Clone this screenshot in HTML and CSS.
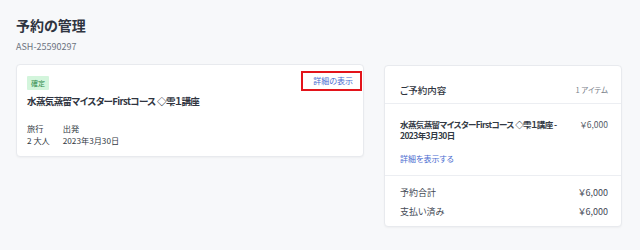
FILE: index.html
```html
<!DOCTYPE html>
<html lang="ja">
<head>
<meta charset="utf-8">
<link rel="stylesheet" href="styles.css">
</head>
<body>
<div class="page">
  <h1 class="title">予約の管理</h1>
  <div class="ref">ASH-25590297</div>
  <div class="cols">
    <div class="card booking">
      <div class="booking-top">
        <span class="badge">確定</span>
        <a class="detail-link">詳細の表示</a>
      </div>
      <div class="booking-name">水蒸気蒸留マイスターFirstコース ◇雫１講座</div>
      <div class="meta">
        <div class="meta-col">
          <div>旅行</div>
          <div>2 大人</div>
        </div>
        <div class="meta-col">
          <div>出発</div>
          <div>2023年3月30日</div>
        </div>
      </div>
    </div>
    <div class="card summary">
      <div class="sum-head">
        <span class="sum-title">ご予約内容</span>
        <span class="sum-count">1 アイテム</span>
      </div>
      <div class="sum-item">
        <div class="item-row">
          <span class="item-name">水蒸気蒸留マイスターFirstコース ◇雫１講座 - 2023年3月30日</span>
          <span class="item-price">￥6,000</span>
        </div>
        <a class="item-link">詳細を表示する</a>
      </div>
      <div class="sum-totals">
        <div class="total-row"><span>予約合計</span><span>￥6,000</span></div>
        <div class="total-row"><span>支払い済み</span><span>￥6,000</span></div>
      </div>
    </div>
  </div>
</div>
</body>
</html>
```
FILE: styles.css
```css
* { box-sizing: border-box; }
html, body { margin: 0; padding: 0; background: #f7f8fa; }
body {
  font-family: "Noto Sans CJK JP", "Noto Sans", sans-serif;
  font-feature-settings: "palt";
  color: #333a44;
  width: 640px;
  height: 250px;
  overflow: hidden;
}
.page { padding: 12px 16px 0 16px; }
.title {
  margin: 0;
  font-size: 14px;
  font-weight: 700;
  line-height: 26px;
  color: #2f3440;
}
.ref {
  font-size: 9px;
  color: #6b7280;
  line-height: 16px;
  margin-top: 1px;
}
.cols {
  display: flex;
  align-items: flex-start;
  gap: 20px;
  margin-top: 10px;
}
.card {
  background: #fff;
  border: 1px solid #e8eaee;
  border-radius: 4px;
  box-shadow: 0 1px 2px rgba(0,0,0,0.04);
}
.booking {
  width: 348px;
  padding: 6px 10px 10px 10px;
  margin-top: -1px;
}
.booking-top {
  display: flex;
  justify-content: space-between;
  align-items: flex-start;
}
.badge {
  margin-top: 5px;
  background: #d3f5dc;
  color: #2f8a4b;
  font-size: 7px;
  line-height: 14px;
  padding: 0 4px;
  border-radius: 1px;
}
.detail-link {
  color: #4a6cd0;
  font-size: 8px;
  line-height: 16px;
  border: 2px solid #e3141b;
  padding: 0 7px 0 10px;
  margin-right: -9px;
}
.booking-name {
  font-size: 9.5px;
  font-weight: 700;
  letter-spacing: -0.6px;
  line-height: 18px;
  margin-top: 1px;
  color: #2f3440;
}
.meta {
  display: flex;
  gap: 13px;
  margin-top: 12px;
  font-size: 8.2px;
  line-height: 12px;
  color: #333a44;
}
.summary {
  width: 238px;
  margin-top: 0px;
}
.sum-head {
  display: flex;
  justify-content: space-between;
  align-items: center;
  padding: 14px 13px 4px 15px;
  border-bottom: 1px solid #eceef2;
  height: 38px;
}
.sum-title { font-size: 9.5px; font-weight: 500; color: #2f3440; }
.sum-count { font-size: 7.5px; color: #7a808a; }
.sum-item {
  padding: 15px 13px 10px 15px;
  border-bottom: 1px solid #eceef2;
}
.item-row {
  display: flex;
  justify-content: space-between;
  gap: 20px;
}
.item-name {
  font-size: 8.5px;
  font-weight: 700;
  letter-spacing: -0.6px;
  line-height: 11px;
  color: #333a44;
}
.item-price { font-size: 8.5px; color: #555b66; white-space: nowrap; line-height: 11px; }
.item-link {
  display: block;
  margin-top: 12px;
  color: #4a6cd0;
  font-size: 8px;
  line-height: 12px;
}
.sum-totals { padding: 10px 13px 8px 15px; }
.total-row {
  display: flex;
  justify-content: space-between;
  font-size: 9px;
  line-height: 13px;
  color: #444a55;
  margin-bottom: 6px;
}
.total-row:last-child { margin-bottom: 0; }
```
